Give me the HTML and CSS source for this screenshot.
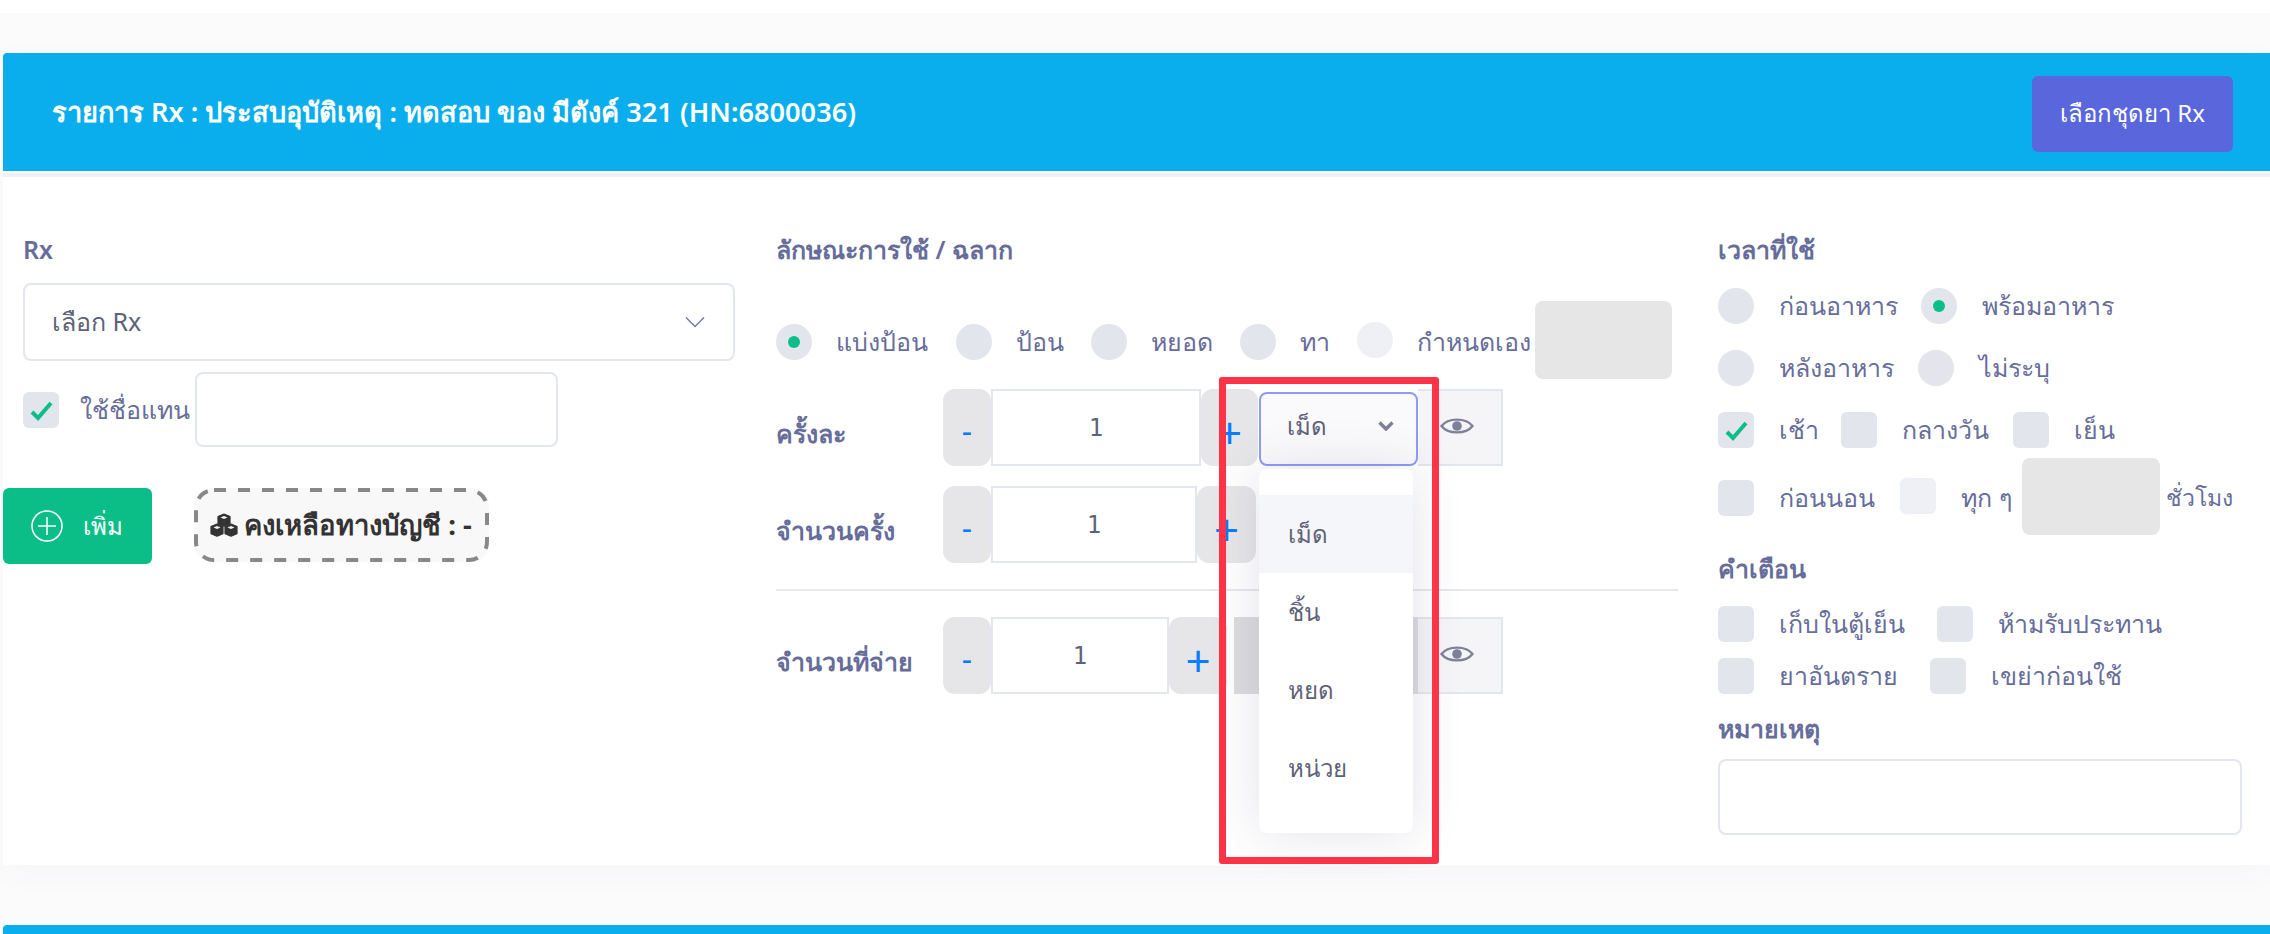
FILE: index.html
```html
<!DOCTYPE html>
<html lang="th">
<head>
  <meta charset="UTF-8" />
  <title>รายการ Rx</title>
  <link rel="stylesheet" href="styles.css">
</head>
<body>
  <div class="top-card"></div>

  <div class="panel">
    <div class="panel-head">
      <h3>รายการ Rx : ประสบอุบัติเหตุ : ทดสอบ ของ มีตังค์ 321 (HN:6800036)</h3>
      <button class="btn-set">เลือกชุดยา Rx</button>
    </div>

    <div class="panel-body">
      <div class="col-rx">
        <div class="title">Rx</div>
        <div class="rx-select">
          <span>เลือก Rx</span>
          <svg width="20" height="12" viewBox="0 0 20 12"><path d="M1 1.500 10 10.500 19 1.500" fill="none" stroke="#6b7aa8" stroke-width="1.4"/></svg>
        </div>
        <div class="alias-row">
          <span class="box"><svg width="36" height="36" viewBox="0 0 36 36"><path d="M9 20l6 6L28 11" fill="none" stroke="#0bbd87" stroke-width="4"/></svg></span>
          <span class="opt-text alias-text">ใช้ชื่อแทน</span>
          <div class="alias-input"></div>
        </div>
        <div class="action-row">
          <button class="btn-add">
            <svg width="32" height="32" viewBox="0 0 32 32"><circle cx="16" cy="16" r="15" fill="none" stroke="#fff" stroke-width="1.5"/><path d="M16 7v18M7 16h18" stroke="#fff" stroke-width="1.5"/></svg>
            <span>เพิ่ม</span>
          </button>
          <div class="stock">
            <svg class="stock-border" width="295" height="74" viewBox="0 0 295 74"><rect x="2" y="2" width="291" height="70" rx="18" fill="none" stroke="#888" stroke-width="4" stroke-dasharray="12 12"/></svg>
            <svg width="28" height="24" viewBox="0 0 28 24"><g fill="#333" stroke="#333" stroke-width="1.2" stroke-linejoin="round"><path d="M14 1l6 2.600v7L14 13.200 8 10.600v-7z"/><path d="M7 11l6 2.600v7L7 23.200 1 20.600v-7z"/><path d="M21 11l6 2.600v7L21 23.200 15 20.600v-7z"/></g><g fill="#f8f8f8"><path d="M14 3l3.500 1.500L14 6 10.500 4.500z"/><path d="M7 13l3.500 1.500L7 16 3.500 14.500z"/><path d="M21 13l3.500 1.500L21 16 17.500 14.500z"/></g></svg>
            <b>คงเหลือทางบัญชี : -</b>
          </div>
        </div>
      </div>

      <div class="col-usage">
        <div class="title">ลักษณะการใช้ / ฉลาก</div>
        <div class="usage-types">
          <span class="round on"></span><span class="opt-text w-a">แบ่งป้อน</span>
          <span class="round"></span><span class="opt-text w-b">ป้อน</span>
          <span class="round"></span><span class="opt-text w-c">หยอด</span>
          <span class="round"></span><span class="opt-text w-d">ทา</span>
          <span class="round faded"></span><span class="opt-text w-e">กำหนดเอง</span>
          <div class="grey-input custom-input"></div>
        </div>

        <div class="dose-row row-first">
          <div class="dose-label">ครั้งละ</div>
          <div class="step">-</div>
          <div class="num num-a">1</div>
          <div class="step step-plus plus-a">+</div>
          <div class="unit-wrap">
            <div class="unit-select">
              <span>เม็ด</span>
              <svg width="16" height="10" viewBox="0 0 16 10"><path d="M1.500 1.500 8 8l6.500-6.500" fill="none" stroke="#7e8299" stroke-width="3.400"/></svg>
            </div>
            <ul class="unit-menu">
              <li class="active">เม็ด</li>
              <li>ชิ้น</li>
              <li>หยด</li>
              <li>หน่วย</li>
            </ul>
          </div>
          <div class="eye-box">
            <svg width="34" height="20" viewBox="0 0 34 20"><path d="M1.500 10C8 1.500 26 1.500 32.500 10 26 18.500 8 18.500 1.500 10z" fill="none" stroke="#7e8299" stroke-width="2.4"/><circle cx="17" cy="10" r="4.800" fill="#7e8299"/></svg>
          </div>
        </div>

        <div class="dose-row row-second">
          <div class="dose-label">จำนวนครั้ง</div>
          <div class="step">-</div>
          <div class="num num-b">1</div>
          <div class="step step-plus plus-b">+</div>
        </div>

        <hr class="sep">

        <div class="dose-row">
          <div class="dose-label">จำนวนที่จ่าย</div>
          <div class="step">-</div>
          <div class="num num-c">1</div>
          <div class="step step-plus plus-c">+</div>
          <div class="unit-off"></div>
          <div class="eye-box">
            <svg width="34" height="20" viewBox="0 0 34 20"><path d="M1.500 10C8 1.500 26 1.500 32.500 10 26 18.500 8 18.500 1.500 10z" fill="none" stroke="#7e8299" stroke-width="2.4"/><circle cx="17" cy="10" r="4.800" fill="#7e8299"/></svg>
          </div>
        </div>
      </div>

      <div class="col-time">
        <div class="title">เวลาที่ใช้</div>
        <div class="opt-row first">
          <span class="round"></span><span class="opt-text t-a">ก่อนอาหาร</span>
          <span class="round on"></span><span class="opt-text">พร้อมอาหาร</span>
        </div>
        <div class="opt-row">
          <span class="round"></span><span class="opt-text t-b">หลังอาหาร</span>
          <span class="round"></span><span class="opt-text">ไม่ระบุ</span>
        </div>
        <div class="opt-row">
          <span class="box"><svg width="36" height="36" viewBox="0 0 36 36"><path d="M9 20l6 6L28 11" fill="none" stroke="#0bbd87" stroke-width="4"/></svg></span><span class="opt-text t-c">เช้า</span>
          <span class="box"></span><span class="opt-text t-d">กลางวัน</span>
          <span class="box"></span><span class="opt-text">เย็น</span>
        </div>
        <div class="opt-row hours">
          <span class="box"></span><span class="opt-text t-e">ก่อนนอน</span>
          <span class="box faded lift"></span><span class="opt-text t-f">ทุก ๆ</span>
          <div class="grey-input hours-input"></div>
          <span class="opt-text hours-text">ชั่วโมง</span>
        </div>

        <div class="title warn-title">คำเตือน</div>
        <div class="opt-row warn">
          <span class="box"></span><span class="opt-text t-g">เก็บในตู้เย็น</span>
          <span class="box"></span><span class="opt-text">ห้ามรับประทาน</span>
        </div>
        <div class="opt-row warn">
          <span class="box"></span><span class="opt-text t-h">ยาอันตราย</span>
          <span class="box"></span><span class="opt-text">เขย่าก่อนใช้</span>
        </div>

        <div class="title note-title">หมายเหตุ</div>
        <div class="note"></div>
      </div>
    </div>
  </div>

  <div class="next-head"></div>

  <div class="red-mark"></div>
</body>
</html>
```

FILE: styles.css
```css
* { box-sizing: border-box; margin: 0; padding: 0; }
html, body {
  width: 100%;
  height: 100%;
  overflow: hidden;
  background: #fbfbfc;
  font-family: "Noto Sans", sans-serif;
  color: #5e6278;
}
svg { display: block; flex: none; }
.top-card { height: 13px; background: #fff; }

.panel { margin: 40px 0 0 3px; background: #fff; box-shadow: 0 8px 30px rgba(82, 63, 105, .03); }
.panel-head {
  height: 118px;
  background: #0aaeec;
  display: flex;
  align-items: center;
  justify-content: space-between;
  padding: 0 37px 0 49px;
  border-radius: 4px 0 0 0;
}
.panel-head h3 { font-size: 27.2px; font-weight: 600; color: #fff; }
.btn-set {
  width: 201px;
  height: 76px;
  border: none;
  border-radius: 6px;
  background: #5a67dc;
  color: #fff;
  font: 24px "Noto Sans", sans-serif;
  margin-top: 3px;
}
.panel-body {
  height: 692px;
  border-top: 4px solid #f0f1f6;
  margin-top: 2px;
  padding-top: 56px;
  display: grid;
  grid-template-columns: 733px 902px 524px;
  column-gap: 40px;
  margin-bottom: 60px;
}
.title { font-size: 25px; font-weight: 600; line-height: 32px; color: #676d9b; }
.opt-text { font-size: 25px; line-height: 36px; padding-bottom: 2px; color: #676d9b; white-space: nowrap; }

/* left column */
.col-rx { padding-left: 20px; }
.rx-select {
  width: 712px;
  height: 78px;
  margin-top: 18px;
  padding: 0 28px 0 27px;
  border: 2px solid #e4e6ef;
  border-radius: 8px;
  display: flex;
  align-items: center;
  justify-content: space-between;
  font-size: 25px;
  color: #5e6278;
}
.alias-row { display: flex; align-items: center; margin-top: 11px; }
.alias-text { margin-left: 21px; }
.alias-input { width: 363px; height: 75px; margin-left: 5px; border: 2px solid #e4e6ef; border-radius: 8px; }
.action-row { display: flex; margin: 41px 0 0 -20px; }
.btn-add {
  width: 149px;
  height: 76px;
  border: none;
  border-radius: 6px;
  background: #0bbd87;
  color: #fff;
  display: flex;
  align-items: center;
  gap: 20px;
  padding-left: 28px;
  font: 24px "Noto Sans", sans-serif;
}
.stock {
  position: relative;
  width: 295px;
  height: 74px;
  margin-left: 42px;
  border-radius: 18px;
  background: #f8f8f8;
  display: flex;
  align-items: center;
  gap: 6px;
  padding-left: 16px;
  font-size: 27.5px;
  color: #333;
  white-space: nowrap;
}
.stock-border { position: absolute; left: 0; top: 0; }

/* shared check controls */
.box, .round {
  flex: none;
  width: 36px;
  height: 36px;
  background: #e2e5ec;
  display: inline-block;
}
.box { border-radius: 6px; }
.round { border-radius: 50%; position: relative; }
.round.on::after {
  content: "";
  position: absolute;
  left: 12px;
  top: 12px;
  width: 12px;
  height: 12px;
  border-radius: 50%;
  background: #0bbd87;
}
.faded { background: #eff0f5; }
.lift { margin-top: -4px; }
.grey-input { flex: none; background: #e6e6e6; border-radius: 8px; }

/* middle column */
.usage-types { display: flex; align-items: center; height: 78px; margin-top: 36px; }
.usage-types .round { margin-top: 4px; }
.usage-types .round.faded { margin-top: 0; }
.usage-types .opt-text { margin: 4px 0 0 24px; }
.w-a { width: 120px; }
.w-b { width: 75px; }
.w-c { width: 89px; }
.w-d { width: 57px; }
.w-e { width: 118px; }
.custom-input { width: 137px; height: 78px; }

.dose-row { display: flex; height: 77px; align-items: stretch; }
.row-first { margin-top: 10px; }
.row-second { margin-top: 20px; }
.dose-label {
  width: 167px;
  font-size: 25px;
  font-weight: 600;
  line-height: 88px;
  color: #676d9b;
  white-space: nowrap;
}
.step {
  width: 48px;
  background: #e6e6e8;
  border-radius: 12px;
  color: #0a7cff;
  font-size: 32px;
  line-height: 84px;
  text-align: center;
}
.step-plus { font-size: 44px; line-height: 86px; }
.plus-a { width: 57px; }
.plus-b { width: 59px; }
.plus-c { width: 58px; }
.num {
  border: 2px solid #e4e6ef;
  background: #fff;
  text-align: center;
  font-family: "DejaVu Sans Mono", monospace;
  font-size: 24px;
  line-height: 74px;
  color: #5e6278;
}
.num-a { width: 210px; }
.num-b { width: 206px; }
.num-c { width: 178px; }

.unit-wrap { position: relative; width: 159px; margin: 3px 0 0 1px; height: 74px; }
.unit-select {
  height: 100%;
  border: 2px solid #8c9cf5;
  border-radius: 8px;
  background: #fafafc;
  display: flex;
  align-items: center;
  justify-content: space-between;
  padding: 0 22px 6px 26px;
  font-size: 24px;
}
.unit-menu {
  position: absolute;
  top: 77px;
  left: 0;
  width: 154px;
  padding: 26px 0;
  list-style: none;
  background: #fff;
  border-radius: 8px;
  box-shadow: 0 0 50px rgba(82, 63, 105, .16);
  z-index: 2;
}
.unit-menu li { height: 78px; padding-left: 29px; font-size: 24px; line-height: 78px; color: #5e6278; }
.unit-menu li.active { background: #f5f6f9; }
.eye-box {
  width: 85px;
  border-top: 2px solid #e4e6ef;
  border-bottom: 2px solid #e4e6ef;
  border-right: 2px solid #e4e6ef;
  background: #f5f5f8;
  padding: 25px 0 0 22px;
}
.sep { border: none; border-top: 2px solid #e8e8ec; margin: 26px 0; }
.unit-off { width: 184px; margin-left: 7px; background: #dcdcde; }

/* right column */
.opt-row { display: flex; align-items: center; height: 36px; margin-top: 26px; }
.opt-row.first { margin-top: 23px; }
.opt-row .opt-text { margin-left: 25px; }
.t-a { width: 142px; }
.t-b { width: 139px; }
.t-c { width: 62px; }
.t-d { width: 111px; }
.t-e { width: 121px; }
.t-f { width: 61px; }
.t-g { width: 158px; }
.t-h { width: 151px; }
.hours { margin-top: 32px; }
.opt-row .hours-text { margin-left: 6px; font-size: 23px; }
.hours-input { width: 138px; height: 77px; margin-top: -3px; }
.warn-title { margin-top: 36px; }
.opt-row.warn { margin-top: 16px; }
.warn-title + .opt-row.warn { margin-top: 22px; }
.note-title { margin-top: 18px; }
.note { width: 524px; height: 76px; margin-top: 15px; border: 2px solid #e4e6ef; border-radius: 8px; }

.next-head { height: 20px; margin-left: 3px; background: #0aaeec; border-radius: 4px 0 0 0; }

/* annotation drawn over the screenshot */
.red-mark {
  position: absolute;
  left: 1219px;
  top: 377px;
  width: 220px;
  height: 487px;
  border: 7px solid #ff3347;
  border-radius: 3px;
  z-index: 5;
}
```
